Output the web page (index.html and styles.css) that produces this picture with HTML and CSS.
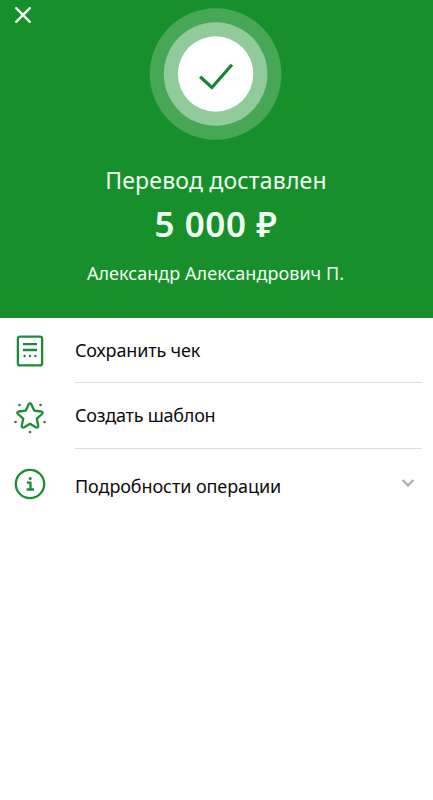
FILE: index.html
```html
<!DOCTYPE html>
<html lang="ru">
<head>
<meta charset="utf-8">
<title>Перевод доставлен</title>
<link rel="stylesheet" href="styles.css">
</head>
<body>
<header class="hero">
  <button class="close" aria-label="Закрыть">
    <svg width="18" height="18" viewBox="0 0 18 18"><path d="M2.2 2.2 15.8 15.8M15.8 2.2 2.2 15.8"/></svg>
  </button>
  <svg class="status" width="132" height="132" viewBox="0 0 132 132">
    <circle class="halo" cx="65.6" cy="66" r="65.8"/>
    <circle class="ring" cx="65.6" cy="66" r="51.8"/>
    <circle class="disc" cx="65.6" cy="66" r="37.7"/>
    <path class="check" d="M50.1 68.8 61.9 79.5 81.9 56.7"/>
  </svg>
  <h1 class="title">Перевод доставлен</h1>
  <p class="amount">5 000 ₽</p>
  <p class="name">Александр Александрович П.</p>
</header>
<main class="actions">
  <div class="row">
    <svg class="icon" width="32" height="32" viewBox="0 0 32 32">
      <rect x="3.9" y="1.6" width="24.2" height="28.8" rx="2.2"/>
      <path d="M9 9.2H23M9 15H23"/>
      <g class="dots"><circle cx="10.6" cy="21" r="1.25"/><circle cx="16" cy="21" r="1.25"/><circle cx="21.4" cy="21" r="1.25"/></g>
    </svg>
    <div class="label"><span class="save">Сохранить чек</span></div>
  </div>
  <div class="row">
    <svg class="icon" width="32" height="32" viewBox="0 0 32 32">
      <path d="M14.7 3.3Q16 1.1 17.3 3.3L20.2 9.6 27.2 10.5Q29.8 11.1 28 13L22.8 17.7 24.2 24.6Q24.4 27.4 21.8 26.2L16 22.7 10.2 26.2Q7.6 27.4 7.8 24.6L9.2 17.7 4 13Q2.2 11.1 4.8 10.5L11.8 9.6Z"/>
      <g class="dots"><circle cx="5.5" cy="4" r="1.35"/><circle cx="26.5" cy="4" r="1.35"/><circle cx="1.5" cy="21" r="1.35"/><circle cx="30.5" cy="21" r="1.35"/><circle cx="16" cy="31" r="1.35"/></g>
    </svg>
    <div class="label"><span class="template">Создать шаблон</span></div>
  </div>
  <div class="row details">
    <svg class="icon" width="32" height="32" viewBox="0 0 32 32">
      <circle cx="16" cy="16" r="14.2"/>
      <path d="M12.8 14.6H16.5V21.4M12.6 21.5H20"/>
      <g class="dots"><circle cx="16.2" cy="10.5" r="1.5"/></g>
    </svg>
    <div class="label"><span>Подробности операции</span>
      <svg class="chevron" width="14" height="10" viewBox="0 0 14 10"><path d="M1.7 2 7 7.5 12.3 2"/></svg>
    </div>
  </div>
</main>
</body>
</html>
```
FILE: styles.css
```css
* { box-sizing: border-box; }
body {
  margin: 0;
  min-height: 800px;
  background: #fff;
  color: #0c0c0c;
  font-family: "Noto Sans", sans-serif;
}
svg { display: block; flex: none; overflow: visible; fill: none; }
.hero {
  position: relative;
  height: 318px;
  padding: 8px 1px 0 0;
  display: flex;
  flex-direction: column;
  align-items: center;
  background: #17902b;
  color: #f2fff3;
}
.close {
  position: absolute;
  left: 14px;
  top: 6px;
  padding: 0;
  border: 0;
  background: none;
}
.close path { stroke: #f2fff3; stroke-width: 2.4; stroke-linecap: round; }
.halo { fill: #47a757; }
.ring { fill: #92cb9a; }
.disc { fill: #fff; }
.check { stroke: #168434; stroke-width: 3.2; }
.title, .amount, .name { margin: 0; white-space: nowrap; }
.title { margin-top: 24px; font-size: 23px; line-height: 32px; font-weight: 400; letter-spacing: .2px; }
.amount { margin-top: 4px; font-size: 35px; line-height: 48px; font-weight: 600; letter-spacing: .6px; }
.name { margin-top: 13px; padding-right: 1px; font-size: 18px; line-height: 24px; letter-spacing: .05px; }
.actions { padding: 0 11px 0 14px; }
.row { display: flex; align-items: center; height: 65px; gap: 29px; }
.row + .row { height: 66px; }
.row.details { height: 70px; }
.icon { stroke: #1b8c35; stroke-width: 2.3; stroke-linejoin: round; }
.row:nth-child(2) .icon { margin-top: 1px; }
.dots { fill: #1b8c35; stroke: none; }
.label {
  flex: 1;
  height: 100%;
  padding-bottom: 1px;
  display: flex;
  align-items: center;
  justify-content: space-between;
  border-bottom: 1px solid #dedede;
  font-size: 18px;
  letter-spacing: -.08px;
  white-space: nowrap;
}
.save { letter-spacing: -.15px; }
.template { letter-spacing: -.24px; }
.details .label { border: 0; padding: 4px 7px 0 0; }
.chevron path { stroke: #b0b0b0; stroke-width: 2.5; }
.chevron { margin-top: -6px; }
```
